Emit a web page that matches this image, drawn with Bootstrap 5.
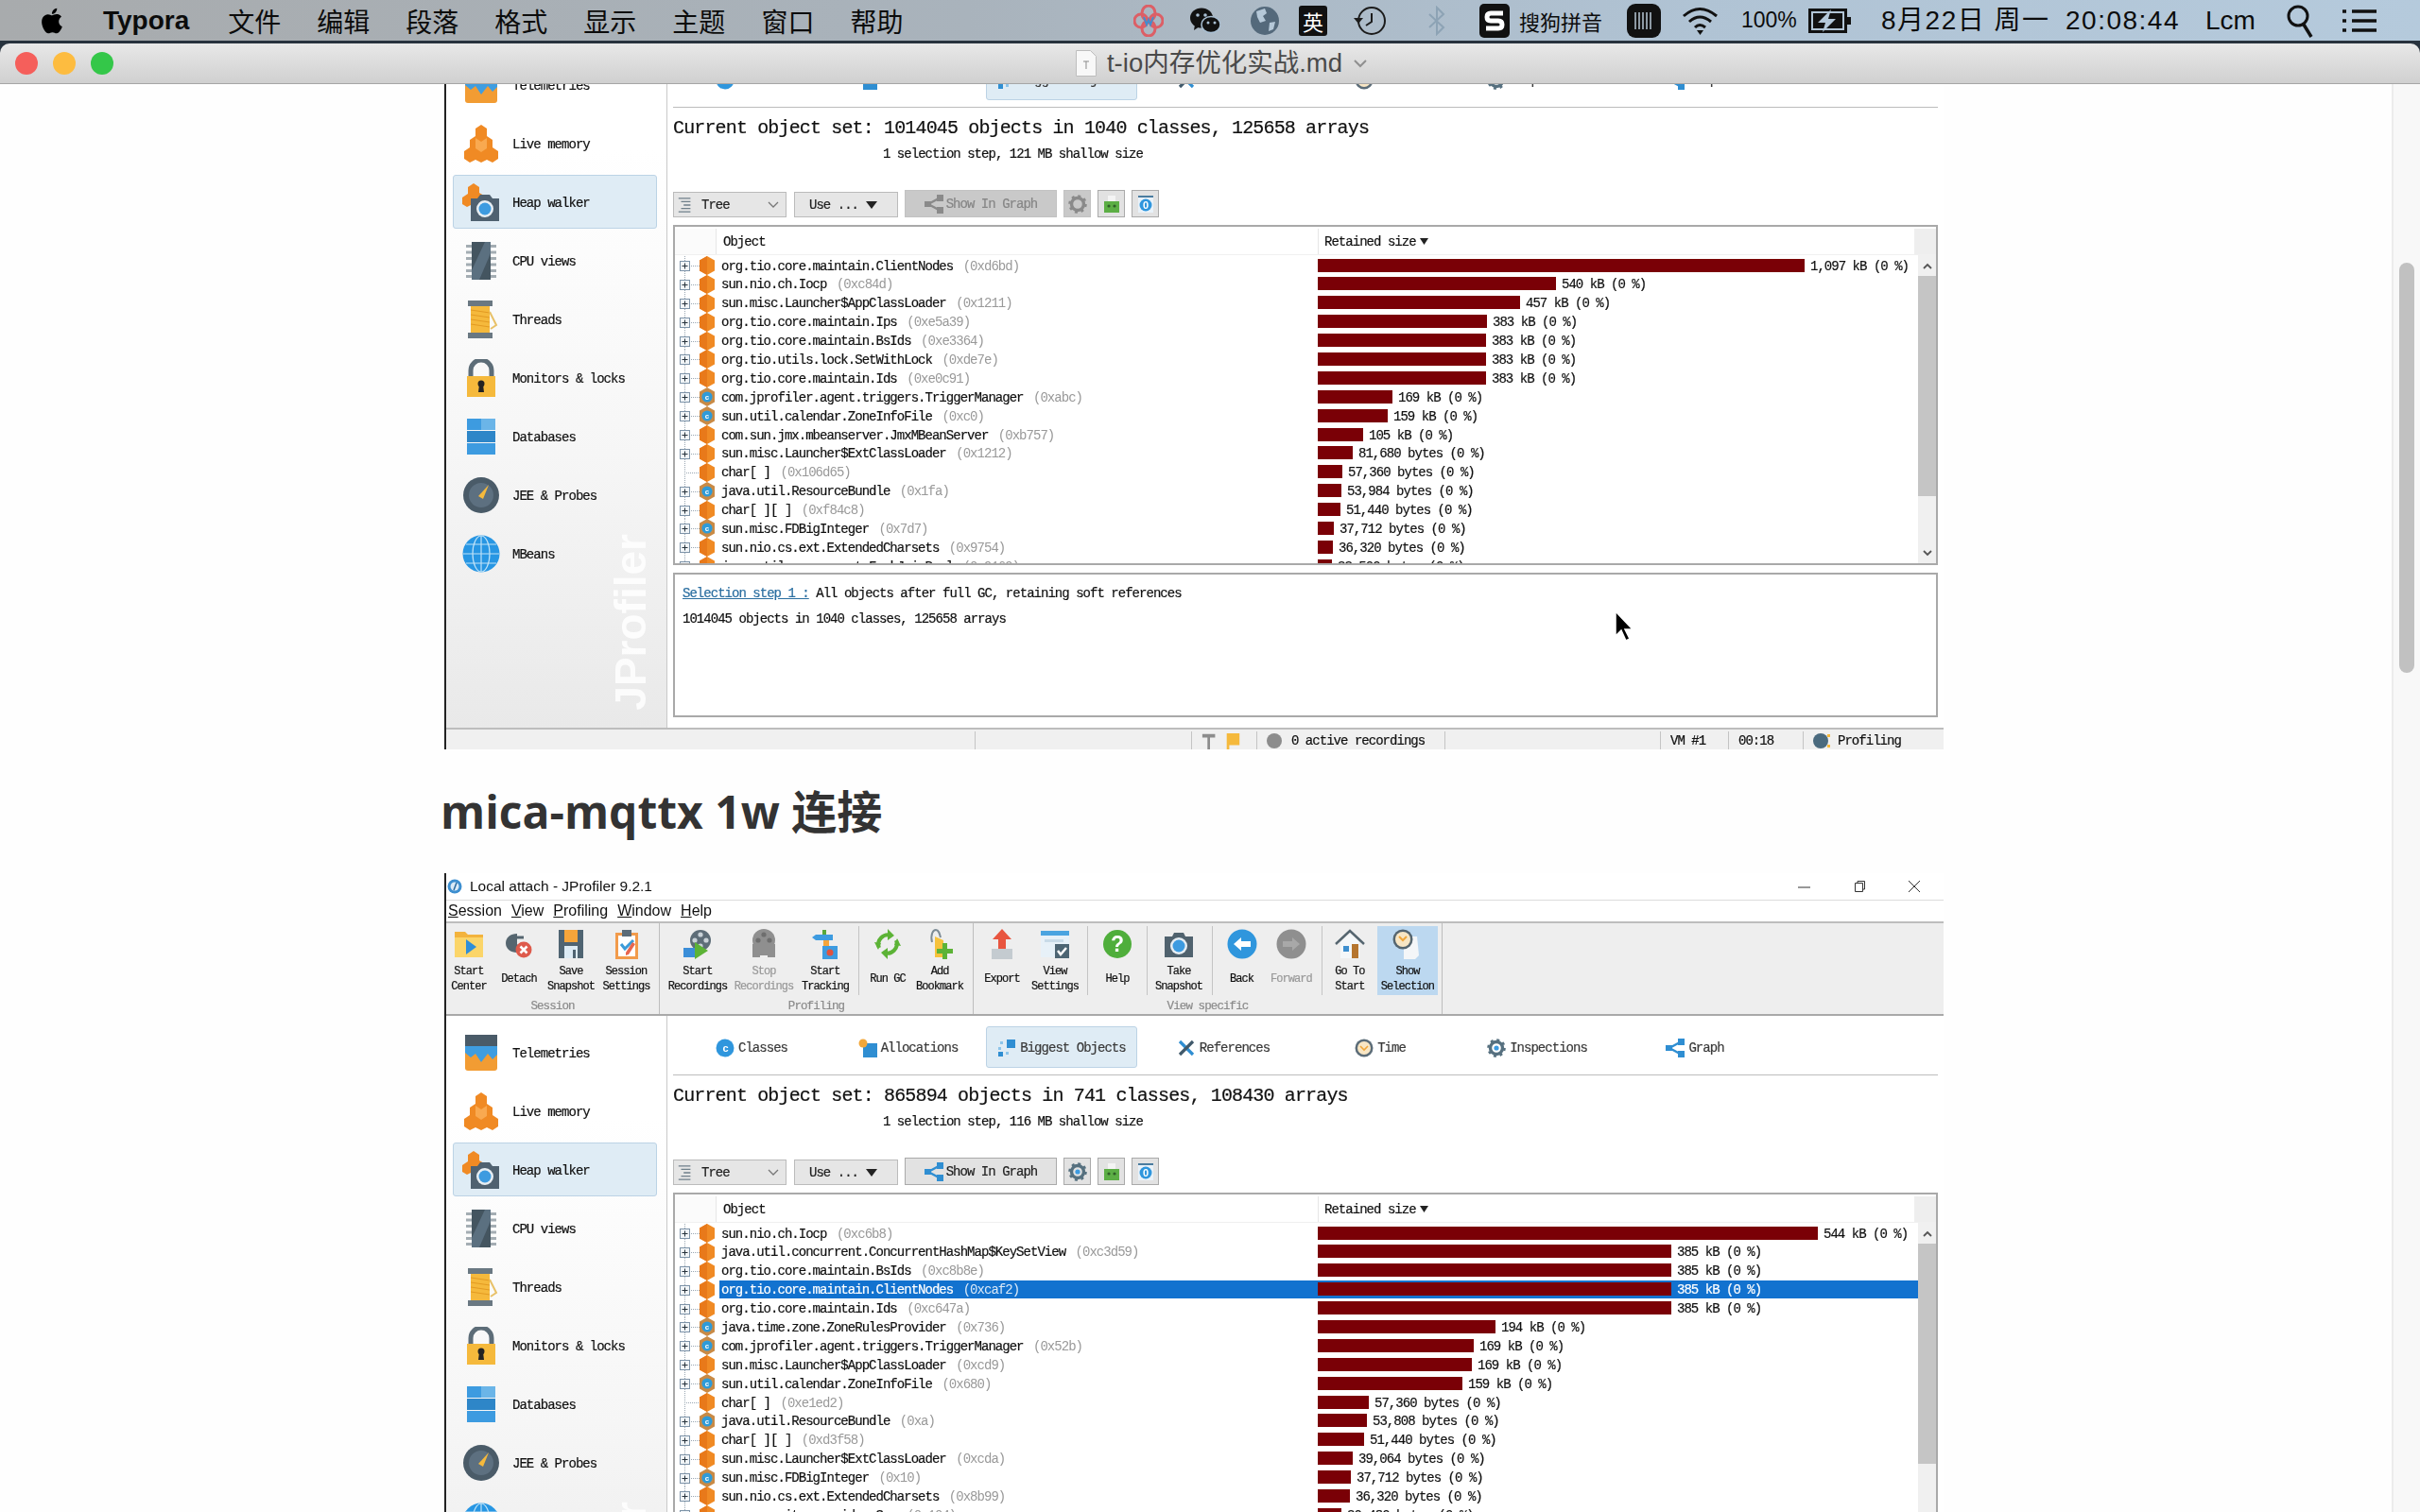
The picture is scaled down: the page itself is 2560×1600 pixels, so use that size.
<!DOCTYPE html>
<html lang="zh-CN">
<head>
  <meta charset="UTF-8" />
  <meta name="viewport" content="width=device-width, initial-scale=1.0"/>
  <title>t-io内存优化实战.md</title>
  <link href="https://cdn.jsdelivr.net/npm/bootstrap@5.3.2/dist/css/bootstrap.min.css" rel="stylesheet">
  <style>
    html, body { height: 100%; overflow: hidden; }
    body { background: #27323d; font-family: "Liberation Sans", "Noto Sans CJK SC", sans-serif; color: #111; }

    /* mac menu bar */
    .mac-bar { height: 43px; padding: 0 46px 0 39px; background: linear-gradient(90deg, #a8abad 0%, #a9b3bc 40%, #b0c3d4 70%, #b5cadc 100%); font-size: 28px; line-height: 1; color: #0c0c0c; }
    .mac-app { font-weight: 700; margin-left: 38px; margin-right: 41px; }
    .mac-item { margin-right: 38px; font-family: "Noto Sans CJK SC", sans-serif; }
    .t-flower { margin-left: 0; }
    .t-wechat { margin-left: 28px; }
    .t-globe { margin-left: 32px; }
    .t-ying { margin-left: 21px; width: 30px; height: 32px; background: #111; color: #fff; font-size: 22px; border-radius: 3px; font-family: "Noto Sans CJK SC", sans-serif; }
    .t-clock { margin-left: 28px; }
    .t-bt { margin-left: 42px; }
    .t-s { margin-left: 35px; }
    .t-sogou { margin-left: 10px; width: 88px; font-size: 22px; font-family: "Noto Sans CJK SC", sans-serif; white-space: nowrap; }
    .t-kbd { margin-left: 26px; }
    .t-wifi { margin-left: 22px; }
    .t-pct { margin-left: 24px; width: 60px; font-size: 23px; white-space: nowrap; }
    .t-batt { margin-left: 11px; }
    .t-date { margin-left: 31px; width: 177px; letter-spacing: 1.5px; white-space: nowrap; font-family: "Liberation Sans", "Noto Sans CJK SC", sans-serif; }
    .t-time { margin-left: 18px; width: 122px; letter-spacing: 1.5px; white-space: nowrap; }
    .t-user { margin-left: 26px; width: 53px; }
    .t-search { margin-left: 33px; }
    .t-list { margin-left: 31px; }

    /* typora window */
    .win-head { height: 43px; margin-top: 3px; border-radius: 10px 10px 0 0; background: linear-gradient(#e8e8e8, #d0d0d0); border-bottom: 1px solid #a6a6a6; }
    .light-dot { width: 24px; height: 24px; border-radius: 50%; margin-right: 16px; }
    .light-red { background: #f55f5b; }
    .light-amber { background: #fdbc40; }
    .light-green { background: #34c749; }
    .win-lights { margin-left: 16px; }
    .win-title { margin-left: 12px; font-size: 27.5px; line-height: 1; color: #4a4a4a; }
    .win-doc { margin-right: 3px; }
    .doc-area { height: 1511px; background: #fefefe; overflow: hidden; }
    .doc-body { width: 2530px; padding-left: 470px; }
    .doc-rail { width: 30px; background: #f8f8f8; border-left: 2px solid #ececec; padding-left: 6px; }
    .doc-thumb { width: 16px; height: 434px; margin-top: 189px; background: #c1c1c1; border-radius: 8px; }
    .doc-heading { height: 131px; margin: 0 0 0 -4px; font-family: "Open Sans", "Noto Sans CJK SC", sans-serif; font-weight: 700; font-size: 48px; color: #333; }
    .shot-first { margin-top: -38px; }
    .mac-cursor { position: absolute; left: 1706px; top: 645px; }

    /* jprofiler screenshot */
    .jp { width: 1586px; border-left: 2px solid #222; background: #fff; color: #111; filter: blur(.3px); }
    .sim { font-family: "Liberation Mono", monospace; font-size: 14px; letter-spacing: -.97px; line-height: 1; white-space: pre; padding-top: 2px; -webkit-text-stroke: .2px; }
    .jp-title { height: 29px; border-bottom: 1px solid #dcdcdc; font-size: 15.5px; padding-left: 1px; }
    .jp-menu { height: 24px; border-bottom: 2px solid #bdbdbd; font-size: 16px; padding-left: 2px; gap: 10px; }
    .jp-winbtn { margin-left: 44px; }
    .jp-tools { height: 98px; background: #eee; border-bottom: 2px solid #a9a9a9; }
    .jp-group { border-right: 1px solid #bdbdbd; }
    .jp-group-label { margin-top: 4px; font-size: 12.5px; letter-spacing: -.9px; color: #8b8b8b; }
    .jp-strip { height: 76px; }
    .jp-tool { padding-top: 3px; height: 73px; margin-top: 3px; }
    .jp-tool-off { color: #999; }
    .jp-tool-on { background: #bcd8f0; }
    .jp-tool-text { height: 32px; margin-top: 5px; padding-top: 0; font-size: 12px; letter-spacing: -.95px; line-height: 16px; }
    .jp-vline { width: 1px; height: 73px; margin-top: 3px; background: #c4c4c4; }
    .jp-main { height: 719px; }
    .jp-side { width: 234px; flex-shrink: 0; padding: 10px 0 0 7px; background: linear-gradient(#fff 15%, #f6f6f6 60%, #e9e9e9); border-right: 1px solid #c9c9c9; overflow: hidden; }
    .jp-side-item { width: 216px; height: 57px; margin-bottom: 5.1px; border: 1px solid transparent; border-radius: 3px; }
    .jp-side-on { background: #dfecf5; border-color: #bcd3e5; }
    .jp-side-icon { width: 58px; }
    .jp-mark { position: absolute; left: 172px; top: 514px; writing-mode: vertical-rl; transform: rotate(180deg); font-family: "Liberation Sans", sans-serif; font-weight: 700; font-size: 46px; line-height: 1; color: rgba(255,255,255,.85); }
    .jp-content { padding: 0 6px; min-width: 0; }
    .jp-tabs { height: 44px; margin-top: 11px; }
    .jp-tab { border: 1px solid transparent; border-radius: 3px; color: #3a3a3a; }
    .jp-tab-on { background: #dfecf5; border-color: #bcd3e5; }
    .jp-rule { height: 1px; margin-top: 7px; background: #bdbdbd; }
    .jp-set { height: 24px; margin-top: 9px; font-size: 20px; letter-spacing: -.85px; line-height: 24px; padding-top: 1px; }
    .jp-sub { height: 18px; margin: 6px 0 0 222px; line-height: 18px; padding-top: 1px; }
    .jp-ctrls { height: 29px; margin-top: 30px; gap: 7px; }
    .jp-ctl { height: 27px; padding: 0 7px; background: #e6e6e6; border: 1px solid #bbb; border-radius: 0; color: #222; }
    .jp-ctl:hover { background: #e6e6e6; border-color: #bbb; color: #222; }
    .jp-ctl-tree { width: 120px; padding-left: 3px; }
    .jp-ctl-use { width: 110px; margin-left: 1px; }
    .jp-ctl-graph { width: 161px; height: 29px; justify-content: center; gap: 3px; background: #e2e2e2; border-color: #aaa; }
    .jp-ctl-square { width: 29px; height: 29px; padding: 0; justify-content: center; background: #e2e2e2; border-color: #aaa; }
    .jp-ctl-dim.jp-ctl-graph, .jp-ctl-dim.jp-ctl-square { background: #c9c9c9; border-color: #c2c2c2; color: #868686; }
    .jp-tbl { height: 360px; margin-top: 8px; border: 2px solid #a9a9a9; overflow: hidden; }
    .jp-thead { height: 30px; border-bottom: 1px solid #f0f0f0; }
    .jp-th-gutter { width: 44px; background: #fbfbfb; border-right: 1px solid #e6e6e6; }
    .jp-th-obj { width: 636px; padding-left: 7px; }
    .jp-th-ret { width: 631px; padding-left: 6px; border-left: 1px solid #e6e6e6; }
    .jp-th-end { width: 23px; background: #eee; }
    .jp-rows { width: 1315px; padding-top: 1px; flex-shrink: 0; }
    .jp-line { height: 19.9px; }
    .jp-cell-obj { width: 633px; padding-left: 2px; height: 19px; }
    .jp-cell-ret { height: 19px; }
    .jp-bar { height: 14px; margin-top: -2px; background: #7a0006; margin-right: 6px; }
    .jp-addr { color: #999; margin-left: 3px; -webkit-text-stroke: 0; }
    .jp-pick .jp-cell-obj, .jp-pick .jp-cell-ret { background: #1272cf; color: #fff; }
    .jp-pick .jp-addr { color: #dbe9f7; }
    .jp-vbar { width: 19px; flex-shrink: 0; background: #f0f0f0; }
    .jp-vbtn { height: 22px; }
    .jp-vthumb { height: 233px; background: #c5c5c5; }
    .jp-detail { height: 153px; margin-top: 8px; border: 2px solid #a9a9a9; padding: 0 8px; }
    .jp-detail-a { height: 19px; margin-top: 10px; line-height: 17px; }
    .jp-detail-b { height: 19px; margin-top: 8px; line-height: 17px; }
    .jp-link { color: #2a6ea0; text-decoration: underline; }
    .jp-status { height: 23px; background: #f0f0f0; border-top: 2px solid #bdbdbd; }
    .jp-stat { border-right: 1px solid #c4c4c4; padding-left: 10px; gap: 6px; }
    .jp-stat:last-child { border-right: 0; }
  </style>
</head>
<body>

<svg class="d-none" xmlns="http://www.w3.org/2000/svg">
  <symbol id="i-apple" viewBox="0 0 24 24"><path fill="#000" d="M18.71 19.5c-.83 1.24-1.71 2.45-3.05 2.47-1.34.03-1.77-.79-3.29-.79-1.53 0-2 .77-3.27.82-1.31.05-2.3-1.32-3.14-2.53C4.25 17 2.94 12.45 4.7 9.39c.87-1.52 2.43-2.48 4.12-2.51 1.28-.02 2.5.87 3.29.87.78 0 2.26-1.07 3.81-.91.65.03 2.47.26 3.64 1.98-.09.06-2.17 1.28-2.15 3.81.03 3.02 2.65 4.03 2.68 4.04-.03.07-.42 1.44-1.38 2.83M13 3.5c.73-.83 1.94-1.46 2.94-1.5.13 1.17-.34 2.35-1.04 3.19-.69.85-1.83 1.51-2.95 1.42-.15-1.15.41-2.35 1.05-3.11z"/></symbol>

  <!-- toolbar -->
  <symbol id="t-start" viewBox="0 0 32 32"><path fill="#f3b33d" d="M1 3h11l3 3h16v24H1z"/><path fill="#fbd569" d="M1 9h30v21H1z"/><path fill="#2f8ed8" d="M13 11l11 8-11 8z"/></symbol>
  <symbol id="t-detach" viewBox="0 0 32 32"><path fill="#55656f" d="M2 15C2 9 7 5 14 5v20C7 25 2 21 2 15z"/><path stroke="#55656f" stroke-width="3" d="M14 9h7M14 18h4"/><circle cx="21" cy="22" r="8.5" fill="#de5a4b"/><path stroke="#fff" stroke-width="2.6" d="M17.5 18.5l7 7m0-7l-7 7"/></symbol>
  <symbol id="t-save" viewBox="0 0 32 32"><path fill="#4f6472" d="M3 1h26v30H3z"/><path fill="#f6a53a" d="M9 1h14v13H9z"/><path fill="#dcebf5" d="M9 18h14v13H9z"/><path fill="#4f6472" d="M18 22h3v9h-3z"/></symbol>
  <symbol id="t-session" viewBox="0 0 32 32"><path fill="#f29b4b" d="M4 4h24v28H4z"/><path fill="#fff" d="M7 7h18v22H7z"/><path fill="#5c6c78" d="M11 1h10v7H11z"/><path stroke="#3b9bd8" stroke-width="3" fill="none" d="M10 16l4 5 9-9"/><path fill="#e8664f" d="M22 14l3 2-7 11-3 1 0-3z"/></symbol>
  <symbol id="t-rec" viewBox="0 0 32 32"><circle cx="19" cy="12" r="11" fill="#5d6d78"/><circle cx="19" cy="6" r="2.6" fill="#c9d2d8"/><circle cx="13" cy="12" r="2.6" fill="#c9d2d8"/><circle cx="25" cy="12" r="2.6" fill="#c9d2d8"/><circle cx="19" cy="18" r="2.6" fill="#c9d2d8"/><path fill="#3b8ed8" d="M1 20h12v10H1z"/><path fill="#5cb336" d="M13 14l14 9-14 9z"/></symbol>
  <symbol id="t-stop" viewBox="0 0 32 32"><circle cx="16" cy="12" r="12" fill="#8f8f8f"/><circle cx="16" cy="6" r="2.6" fill="#6e6e6e"/><circle cx="10" cy="12" r="2.6" fill="#6e6e6e"/><circle cx="22" cy="12" r="2.6" fill="#6e6e6e"/><path fill="#8f8f8f" d="M4 16h8v14H4zM20 16h8v14h-8zM10 20h12v8H10z"/></symbol>
  <symbol id="t-track" viewBox="0 0 32 32"><path fill="#58a83a" d="M13 1h4v9h-4z"/><path fill="#3d9be0" d="M6 6h18v6H6l-4-3z"/><path fill="#f6a53a" d="M14 12h6v7h-6z"/><path fill="#3d9be0" d="M13 18h16v14H13z"/><circle cx="21" cy="25" r="3.5" fill="#e0533f"/></symbol>
  <symbol id="t-gc" viewBox="0 0 32 32"><path fill="none" stroke="#5cb336" stroke-width="4" d="M7 20A10 10 0 0 1 20 7"/><path fill="none" stroke="#5cb336" stroke-width="4" d="M25 12A10 10 0 0 1 12 25"/><path fill="#5cb336" d="M16 0l7 7-7 5zM16 32l-7-7 7-5zM2 14l7 1-3 7zM30 18l-7-1 3-7z"/></symbol>
  <symbol id="t-mark" viewBox="0 0 32 32"><path fill="none" stroke="#7d8c96" stroke-width="2" d="M8 14C6 6 9 1 12 1s4 4 5 8"/><path fill="#f6c23c" d="M11 8l9 4v18H11z"/><path fill="#5cb336" d="M19 15h5v6h6v5h-6v6h-5v-6h-6v-5h6z"/></symbol>
  <symbol id="t-export" viewBox="0 0 32 32"><path fill="#e8553f" d="M16 0l10 11h-6v10h-8V11H6z"/><path fill="#c4cbd0" d="M5 21h22v11H5z"/></symbol>
  <symbol id="t-view" viewBox="0 0 32 32"><path fill="#e7f1f8" d="M1 2h30v28H1z"/><path fill="#4aa4e0" d="M1 2h30v5H1z"/><path fill="#4d6573" d="M16 16h15v15H16z"/><path fill="none" stroke="#fff" stroke-width="2.5" d="M19 23l3 4 6-7"/><path fill="#c8dbe8" d="M5 11h20v3H5z"/></symbol>
  <symbol id="t-help" viewBox="0 0 32 32"><circle cx="16" cy="16" r="15" fill="#4fae3b"/><text x="16" y="24" text-anchor="middle" font-family="Liberation Sans" font-weight="700" font-size="23" fill="#fff">?</text></symbol>
  <symbol id="t-cam" viewBox="0 0 32 32"><path fill="#50626e" d="M1 8h8l2-4h10l2 4h8v22H1z"/><circle cx="16" cy="18" r="9" fill="#e7eef3"/><circle cx="16" cy="18" r="6.5" fill="#3d9be0"/></symbol>
  <symbol id="t-back" viewBox="0 0 32 32"><circle cx="16" cy="16" r="15.5" fill="#2f96dd"/><path fill="#fff" d="M7 16l8-7v4h10v6H15v4z"/></symbol>
  <symbol id="t-fwd" viewBox="0 0 32 32"><circle cx="16" cy="16" r="15.5" fill="#8f8f8f"/><path fill="#a8a8a8" d="M25 16l-8-7v4H7v6h10v4z"/></symbol>
  <symbol id="t-home" viewBox="0 0 32 32"><path fill="none" stroke="#55656f" stroke-width="2.4" d="M1 16L16 2l15 14"/><path fill="#f4f7f9" d="M6 14L16 5l10 9v17H6z"/><path fill="#3d8fcf" d="M9 18h6v6H9z"/><path fill="#b5752e" d="M18 16h7v15h-7z"/></symbol>
  <symbol id="t-clockdoc" viewBox="0 0 32 32"><path fill="#f4f6f8" d="M12 8h14l2 20-4 4H12z"/><circle cx="11" cy="11" r="10.5" fill="#55656f"/><circle cx="11" cy="11" r="8" fill="#f8e6c4"/><path fill="none" stroke="#f0a63a" stroke-width="2" d="M7 8l4 4 4-4"/></symbol>

  <!-- sidebar -->
  <symbol id="s-tele" viewBox="0 0 40 40"><path fill="#f29c33" d="M3 12h34v24a3 3 0 0 1-3 3H6a3 3 0 0 1-3-3z"/><path fill="#4a5b68" d="M3 1h34v12H3z"/><path fill="#3f9de0" d="M3 13h34v9l-5 5-5-6-7 9-6-9-5 4-6-5z"/></symbol>
  <symbol id="s-mem" viewBox="0 0 40 40"><path fill="#f08a24" d="M20 0l6 4v8l6 4v8l6 4v8l-6 4-6-3-6 3-6-3-6 3-6-4v-8l6-4v-8l6-4V4z"/><path fill="#f9a950" d="M14 14l6 4 6-4v11l-6 4-6-4z"/></symbol>
  <symbol id="s-heap" viewBox="0 0 40 40"><path fill="#f08a24" d="M12 0l6 4v6l5 3v8l-6 4-6-3-6 3-5-3v-7l6-4V4z"/><path fill="#4f6170" d="M9 16h7l3-4h10l3 4h7v24H9z"/><circle cx="24" cy="27" r="9" fill="#e7eef3"/><circle cx="24" cy="27" r="6.5" fill="#3d9be0"/></symbol>
  <symbol id="s-cpu" viewBox="0 0 40 40"><path fill="#a4adb3" d="M4 3h32v3H4zM4 9.500h32v3H4zM4 16h32v3H4zM4 22.500h32v3H4zM4 29h32v3H4zM4 35h32v3H4z"/><path fill="#445560" d="M10 0h20v40H10z"/><path fill="#5b7080" d="M10 30L24 0h6v12L18 40h-8z"/></symbol>
  <symbol id="s-thread" viewBox="0 0 40 40"><path fill="#f5b93c" d="M9 6h20v28H9z"/><path stroke="#e39a22" fill="none" d="M9 10l20 3M9 15l20 3M9 20l20 3M9 25l20 3"/><path fill="#6a7882" d="M6 0h26v6H6zM6 34h26v6H6z"/><path fill="none" stroke="#e8c168" stroke-width="2" d="M29 12l7 14-6 4"/></symbol>
  <symbol id="s-lock" viewBox="0 0 40 40"><path fill="none" stroke="#5d6d78" stroke-width="5" d="M9 20V12a11 11 0 0 1 22 0v8"/><path fill="#f5b93c" d="M5 18h30v22H5z"/><circle cx="20" cy="26" r="3.5" fill="#222"/><path fill="#222" d="M18 27h4l1 8h-6z"/></symbol>
  <symbol id="s-db" viewBox="0 0 40 40"><path fill="#3d9be0" d="M5 1h30v12H5z"/><path fill="#2e86c8" d="M5 14h30v12H5z"/><path fill="#3d9be0" d="M5 27h30v12H5z"/><path fill="#6bb5e8" d="M20 1h15v12H20z"/></symbol>
  <symbol id="s-gauge" viewBox="0 0 40 40"><circle cx="20" cy="20" r="19" fill="#4a5b68"/><circle cx="20" cy="20" r="13" fill="#5d7080"/><path fill="#f5b93c" d="M28 9l-6 15-5-3z"/></symbol>
  <symbol id="s-globe" viewBox="0 0 40 40"><circle cx="20" cy="20" r="19.5" fill="#2796e3"/><path fill="none" stroke="#bfe2f7" stroke-width="1.2" d="M20 1v38M1 20h38M4 10h32M4 30h32"/><ellipse cx="20" cy="20" rx="9" ry="19" fill="none" stroke="#bfe2f7" stroke-width="1.2"/></symbol>

  <!-- tabs -->
  <symbol id="b-class" viewBox="0 0 20 20"><circle cx="10" cy="10" r="9.5" fill="#2f96dd"/><text x="10" y="14" text-anchor="middle" font-family="Liberation Sans" font-weight="700" font-size="11" fill="#fff">c</text></symbol>
  <symbol id="b-alloc" viewBox="0 0 20 20"><path fill="#2f8ed2" d="M5 5h15v15H5z"/><circle cx="5" cy="5" r="4.5" fill="#f2a73a"/></symbol>
  <symbol id="b-big" viewBox="0 0 20 20"><path fill="#2f8ed2" d="M10 1h9v9h-9zM1 14h5v5H1z"/><path fill="#8cc4ea" d="M3 3h3v3H3zM1 9h3v3H1zM9 14h3v3H9z"/></symbol>
  <symbol id="b-ref" viewBox="0 0 20 20"><path stroke="#2f8ed2" stroke-width="3.2" d="M3 3l14 14"/><path stroke="#40596b" stroke-width="3.2" d="M17 3L3 17"/></symbol>
  <symbol id="b-time" viewBox="0 0 20 20"><circle cx="10" cy="10" r="9.5" fill="#5b6c78"/><circle cx="10" cy="10" r="7" fill="#f8e6c4"/><path fill="none" stroke="#f0a63a" stroke-width="1.6" d="M6 8l4 4 4-4"/></symbol>
  <symbol id="b-gear" viewBox="0 0 20 20"><circle cx="10" cy="10" r="6.5" fill="none" stroke="#56707f" stroke-width="3.4"/><circle cx="10" cy="10" r="8.6" fill="none" stroke="#56707f" stroke-width="2.4" stroke-dasharray="3 3.75"/><circle cx="10" cy="10" r="2.6" fill="#3d9be0"/></symbol>
  <symbol id="b-gearoff" viewBox="0 0 20 20"><circle cx="10" cy="10" r="6.5" fill="none" stroke="#8a8a8a" stroke-width="3.4"/><circle cx="10" cy="10" r="8.6" fill="none" stroke="#8a8a8a" stroke-width="2.4" stroke-dasharray="3 3.75"/></symbol>
  <symbol id="b-graph" viewBox="0 0 20 20"><path stroke="#2f8ed2" stroke-width="2.4" d="M4 10l11-6M4 10l11 6"/><path fill="#2f8ed2" d="M0 7h7v6H0zM13 0h7v7h-7zM13 13h7v7h-7z"/></symbol>
  <symbol id="b-graphoff" viewBox="0 0 20 20"><path stroke="#8a8a8a" stroke-width="2.4" d="M4 10l11-6M4 10l11 6"/><path fill="#8a8a8a" d="M0 7h7v6H0zM13 0h7v7h-7zM13 13h7v7h-7z"/></symbol>
  <symbol id="b-tree" viewBox="0 0 20 20"><path stroke="#6f7f8a" stroke-width="1.4" d="M2 2h14M5 6h11M8 10h8M5 14h11M2 18h14"/></symbol>
  <symbol id="b-print" viewBox="0 0 20 20"><path fill="#f4f4f4" d="M6 1h8v6H6z"/><path fill="#5cae45" d="M2 7h16v12H2z"/><circle cx="7" cy="12" r="1.6" fill="#2f5e28"/><circle cx="13" cy="12" r="1.6" fill="#2f5e28"/></symbol>
  <symbol id="b-info" viewBox="0 0 20 20"><path fill="#e9f2f9" d="M2 1h16v18H2z"/><path fill="#4a7c9f" d="M2 1h16v2H2z"/><circle cx="10" cy="11" r="6.5" fill="#2f96dd"/><text x="10" y="15" text-anchor="middle" font-family="Liberation Sans" font-weight="700" font-size="11" fill="#fff">0</text></symbol>

  <!-- tree rows, drawn in a 47x20 gutter -->
  <symbol id="r-exp"><path stroke="#9aa7b2" stroke-dasharray="1 1" fill="none" d="M10.5 0v20M15 10.5h11"/><rect x="5.5" y="5.5" width="10" height="10" fill="#f1f5f8" stroke="#7d93a8"/><path stroke="#26323c" d="M7.5 10.5h6M10.5 7.5v6"/></symbol>
  <symbol id="r-leaf"><path stroke="#9aa7b2" stroke-dasharray="1 1" fill="none" d="M10.5 0v20M10 10.5h16"/></symbol>
  <symbol id="r-hex"><path fill="#f08a24" d="M34 0l8 4.5v11L34 20l-8-4.5v-11z"/><path fill="#e8791a" d="M34 0l-8 4.5v11L34 20z"/></symbol>
  <symbol id="r-cls"><path fill="#c98a45" d="M34 0l8 4.5v11L34 20l-8-4.5v-11z"/><circle cx="34" cy="10" r="5.6" fill="#2f9bd8"/><text x="34" y="13" text-anchor="middle" font-family="Liberation Sans" font-weight="700" font-size="8" fill="#fff">c</text></symbol>

  <!-- status bar -->
  <symbol id="x-hammer" viewBox="0 0 20 20"><path fill="#8c8c8c" d="M1 2h15v4H10v14H7V6H1z"/></symbol>
  <symbol id="x-flag" viewBox="0 0 20 20"><path fill="#f5b93c" d="M3 1h15v14H6v5H3z"/></symbol>
  <symbol id="x-prof" viewBox="0 0 20 20"><circle cx="8" cy="10" r="8" fill="#4a6a7e"/><path fill="#f5b93c" d="M15 3h3v3h-3zM15 14h3v3h-3z"/></symbol>
</svg>

<!-- mac menu bar -->
<nav class="navbar flex-nowrap justify-content-start mac-bar">
  <svg width="32" height="36"><use href="#i-apple"/></svg>
  <span class="mac-app">Typora</span>
  <span class="mac-item">文件</span>
  <span class="mac-item">编辑</span>
  <span class="mac-item">段落</span>
  <span class="mac-item">格式</span>
  <span class="mac-item">显示</span>
  <span class="mac-item">主题</span>
  <span class="mac-item">窗口</span>
  <span class="mac-item me-0">帮助</span>
  <div class="d-flex align-items-center ms-auto">
    <svg class="t-flower" width="32" height="34" viewBox="0 0 32 34"><g fill="none" stroke="#dc5f66" stroke-width="3"><ellipse cx="16" cy="9" rx="7" ry="8"/><ellipse cx="16" cy="25" rx="7" ry="8"/><ellipse cx="8" cy="17" rx="7" ry="7"/><ellipse cx="24" cy="17" rx="7" ry="7"/></g><path fill="none" stroke="#3f8ed0" stroke-width="2" d="M11 13l3 8 2-5 2 5 3-8"/></svg>
    <svg class="t-wechat" width="32" height="28" viewBox="0 0 32 28"><ellipse cx="12" cy="11" rx="12" ry="10.5" fill="#111"/><path fill="#111" d="M5 18l-1 6 6-4z"/><ellipse cx="22" cy="18" rx="10" ry="8.5" fill="#111" stroke="#a9c0d4" stroke-width="1.5"/><circle cx="8" cy="8" r="1.8" fill="#a9c0d4"/><circle cx="16" cy="8" r="1.8" fill="#a9c0d4"/><circle cx="19" cy="16" r="1.5" fill="#a9c0d4"/><circle cx="26" cy="16" r="1.5" fill="#a9c0d4"/></svg>
    <svg class="t-globe" width="30" height="30" viewBox="0 0 30 30"><circle cx="15" cy="15" r="15" fill="#54697b"/><path fill="#b5c8d8" d="M6 5l9-3 2 5-4 3 3 5-6 2-3-6zM20 17l6-1-2 8-5 2z"/></svg>
    <span class="t-ying d-flex align-items-center justify-content-center">英</span>
    <svg class="t-clock" width="36" height="32" viewBox="0 0 36 32"><circle cx="19" cy="16" r="14" fill="none" stroke="#1c1c1c" stroke-width="2"/><path fill="none" stroke="#1c1c1c" stroke-width="2" d="M19 8v9l-6 4"/><path fill="#1c1c1c" d="M0 13h10l-5 6z"/></svg>
    <svg class="t-bt" width="20" height="32" viewBox="0 0 20 32"><path fill="none" stroke="#8da3b5" stroke-width="2" d="M2 9l15 14-7 7V2l7 7L2 23"/></svg>
    <svg class="t-s" width="32" height="36" viewBox="0 0 32 36"><rect width="32" height="36" rx="5" fill="#111"/><path fill="none" stroke="#fff" stroke-width="5" d="M25 10H12q-4 0-4 4t4 4h8q4 0 4 4t-4 4H7"/></svg>
    <span class="t-sogou">搜狗拼音</span>
    <svg class="t-kbd" width="36" height="36" viewBox="0 0 36 36"><rect width="36" height="36" rx="9" fill="#111"/><path stroke="#b6c6d4" stroke-width="1.5" d="M9 9v18M13 9v18M17 9v18M21 9v18M25 9v18"/></svg>
    <svg class="t-wifi" width="39" height="30" viewBox="0 0 39 30"><g fill="none" stroke="#111" stroke-width="3"><path d="M2 10q17-15 35 0"/><path d="M8 16q11-10 23 0"/><path d="M14 22q5-5 11 0"/></g><path fill="#111" d="M16 25h7l-3.500 5z"/></svg>
    <span class="t-pct">100%</span>
    <svg class="t-batt" width="46" height="30" viewBox="0 0 46 30"><rect x="1.500" y="3.500" width="38" height="23" fill="none" stroke="#111" stroke-width="3"/><rect x="5" y="7" width="31" height="16" fill="#111"/><path fill="#b4c8da" d="M24 3L10 17h8l-3 10 14-14h-8z"/><rect x="41" y="11" width="4" height="8" fill="#111"/></svg>
    <span class="t-date">8月22日 周一</span>
    <span class="t-time">20:08:44</span>
    <span class="t-user">Lcm</span>
    <svg class="t-search" width="28" height="36" viewBox="0 0 28 36"><circle cx="12" cy="13" r="10" fill="none" stroke="#111" stroke-width="3"/><path stroke="#111" stroke-width="3.500" d="M18 22l8 13"/></svg>
    <svg class="t-list" width="36" height="26" viewBox="0 0 36 26"><path stroke="#111" stroke-width="3.500" d="M0 3h4M10 3h26M0 13h4M10 13h26M0 23h4M10 23h26"/></svg>
  </div>
</nav>

<!-- typora window -->
<header class="win-head d-flex align-items-center position-relative">
  <div class="d-flex win-lights">
    <span class="light-dot light-red"></span>
    <span class="light-dot light-amber"></span>
    <span class="light-dot light-green"></span>
  </div>
  <div class="position-absolute start-50 translate-middle-x d-flex align-items-center gap-2 win-title">
    <svg class="win-doc" width="22" height="28" viewBox="0 0 22 28"><path fill="#f8f8f8" stroke="#bdbdbd" d="M.5.5h15l6 6v21H.5z"/><path fill="none" stroke="#8a8a8a" d="M8 12h6M11 12v8"/></svg>
    <span>t-io内存优化实战.md</span>
    <svg class="ms-1" width="14" height="9" viewBox="0 0 14 9"><path fill="none" stroke="#8f8f8f" stroke-width="2" d="M1 1l6 6 6-6"/></svg>
  </div>
</header>

<main class="doc-area d-flex position-relative">
  <div class="doc-body">
    <div class="jp shot-first" id="shotA"></div>
    <h2 class="doc-heading d-flex align-items-center">mica-mqttx 1w 连接</h2>
    <div class="jp" id="shotB"></div>
  </div>
  <div class="doc-rail"><div class="doc-thumb"></div></div>
</main>

<svg class="mac-cursor" width="24" height="36" viewBox="0 0 24 36"><path fill="#000" stroke="#fff" stroke-width="1.500" d="M3 2v26l6-6 5 11 4-2-5-10h8z"/></svg>

<script src="https://cdn.jsdelivr.net/npm/bootstrap@5.3.2/dist/js/bootstrap.bundle.min.js"></script>
<script>
const use = (id, w, h) => `<svg class="flex-shrink-0" width="${w}" height="${h || w}"><use href="#${id}"/></svg>`;

const toolGroups = [
  { label: "Session", width: 226, items: [
    ["t-start", "Start\nCenter", 48], ["t-detach", "Detach", 58], ["t-save", "Save\nSnapshot", 52], ["t-session", "Session\nSettings", 65]
  ]},
  { label: "Profiling", width: 332, items: [
    ["t-rec", "Start\nRecordings", 80], ["t-stop", "Stop\nRecordings", 60, "off"], ["t-track", "Start\nTracking", 70], "sep",
    ["t-gc", "Run GC", 60], ["t-mark", "Add\nBookmark", 50]
  ]},
  { label: "View specific", width: 496, items: [
    ["t-export", "Export", 60], ["t-view", "View\nSettings", 52], 8, "sep", ["t-help", "Help", 62], "sep",
    ["t-cam", "Take\nSnapshot", 66], 2, "sep", ["t-back", "Back", 61], ["t-fwd", "Forward", 44, "off"], 10, "sep",
    ["t-home", "Go To\nStart", 58], ["t-clockdoc", "Show\nSelection", 64, "on"]
  ]}
];

const sideItems = [
  ["s-tele", "Telemetries"], ["s-mem", "Live memory"], ["s-heap", "Heap walker"], ["s-cpu", "CPU views"], ["s-thread", "Threads"],
  ["s-lock", "Monitors & locks"], ["s-db", "Databases"], ["s-gauge", "JEE & Probes"], ["s-globe", "MBeans"]
];

const tabItems = [
  ["b-class", "Classes", 166], ["b-alloc", "Allocations", 165], ["b-big", "Biggest Objects", 160], ["b-ref", "References", 182],
  ["b-time", "Time", 150], ["b-gear", "Inspections", 182], ["b-graph", "Graph", 152]
];

function toolsHtml() {
  return toolGroups.map(g => {
    const items = g.items.map(it => {
      if (it === "sep") return `<div class="jp-vline flex-shrink-0"></div>`;
      if (typeof it === "number") return `<div class="flex-shrink-0" style="width:${it}px"></div>`;
      const [icon, text, w, state] = it;
      const cls = state === "off" ? "jp-tool-off" : state === "on" ? "jp-tool-on" : "";
      return `<div class="jp-tool d-flex flex-column align-items-center flex-shrink-0 ${cls}" style="width:${w}px">
        ${use(icon, 32)}
        <div class="jp-tool-text sim text-center d-flex align-items-center">${text.replace("\n", "<br>")}</div>
      </div>`;
    }).join("");
    return `<div class="jp-group" style="width:${g.width}px">
      <div class="jp-strip d-flex">${items}</div>
      <div class="jp-group-label sim text-center">${g.label}</div>
    </div>`;
  }).join("");
}

function rowHtml(r) {
  const [name, addr, size, width, kind, pick] = r;
  const gutter = (kind === "leaf" ? "#r-leaf" : "#r-exp");
  const body = kind === "cls" ? "#r-cls" : "#r-hex";
  return `<div class="jp-line d-flex ${pick ? "jp-pick" : ""}">
    <svg class="flex-shrink-0" width="47" height="20"><use href="${gutter}"/><use href="${body}"/></svg>
    <div class="jp-cell-obj sim d-flex align-items-center flex-shrink-0">${name} <span class="jp-addr">(${addr})</span></div>
    <div class="jp-cell-ret sim d-flex align-items-center flex-grow-1"><span class="jp-bar" style="width:${width}px"></span>${size} (0 %)</div>
  </div>`;
}

function chromeHtml() {
  return `
  <div class="jp-title d-flex align-items-center">
    <svg class="me-1" width="16" height="18" viewBox="0 0 16 18"><circle cx="8" cy="9" r="7.5" fill="#3d8fd0"/><circle cx="8" cy="9" r="4.5" fill="#dbeaf6"/><path stroke="#2b6aa0" stroke-width="1.500" d="M10 5L7 13"/></svg>
    <span class="ms-1">Local attach - JProfiler 9.2.1</span>
    <div class="ms-auto d-flex align-items-center">
      <svg width="14" height="14"><path stroke="#333" d="M0 8h13"/></svg>
      <svg class="jp-winbtn" width="14" height="14" viewBox="0 0 14 14"><path fill="none" stroke="#333" d="M2.500 3.500h8v9h-8zM5 3V1.500h7.500V10H11"/></svg>
      <svg class="jp-winbtn me-4" width="14" height="14" viewBox="0 0 14 14"><path stroke="#333" d="M1 1l12 12M13 1L1 13"/></svg>
    </div>
  </div>
  <div class="jp-menu d-flex align-items-center">
    <span><u>S</u>ession</span><span><u>V</u>iew</span><span><u>P</u>rofiling</span><span><u>W</u>indow</span><span><u>H</u>elp</span>
  </div>
  <div class="jp-tools d-flex">${toolsHtml()}</div>`;
}

function footHtml(d) {
  return `
      <div class="jp-detail">
        <div class="jp-detail-a sim"><span class="jp-link">Selection step 1 :</span> All objects after full GC, retaining soft references</div>
        <div class="jp-detail-b sim">${d.summary}</div>
      </div>`;
}

function statusHtml() {
  return `
  <div class="jp-status d-flex sim">
    <div class="jp-stat d-flex align-items-center" style="width:560px"></div>
    <div class="jp-stat d-flex align-items-center" style="width:229px"></div>
    <div class="jp-stat d-flex align-items-center" style="width:69px">${use("x-hammer", 18)}${use("x-flag", 18)}</div>
    <div class="jp-stat d-flex align-items-center" style="width:199px"><svg class="flex-shrink-0" width="16" height="18"><circle cx="8" cy="9" r="8" fill="#8c8c8c"/></svg><span class="ms-1">0 active recordings</span></div>
    <div class="jp-stat d-flex align-items-center" style="width:228px"></div>
    <div class="jp-stat d-flex align-items-center" style="width:72px">VM #1</div>
    <div class="jp-stat d-flex align-items-center" style="width:79px">00:18</div>
    <div class="jp-stat d-flex align-items-center" style="width:148px">${use("x-prof", 20)}Profiling</div>
  </div>`;
}

function shotHtml(d) {
  const off = d.dim ? "jp-ctl-dim" : "";
  return `
  ${d.chrome ? chromeHtml() : ""}
  <div class="jp-main d-flex">
    <div class="jp-side position-relative">
      ${sideItems.map(s => `<div class="jp-side-item d-flex align-items-center ${s[1] === "Heap walker" ? "jp-side-on" : ""}">
        <div class="jp-side-icon d-flex justify-content-center">${use(s[0], 40)}</div><span class="sim ms-1">${s[1].replace("&", "&amp;")}</span>
      </div>`).join("")}
      <div class="jp-mark">JProfiler</div>
    </div>
    <div class="jp-content flex-grow-1">
      <div class="jp-tabs d-flex">
        ${tabItems.map(t => `<div class="jp-tab sim d-flex align-items-center justify-content-center gap-1 flex-shrink-0 ${t[1] === "Biggest Objects" ? "jp-tab-on" : ""}" style="width:${t[2]}px">${use(t[0], 20)}${t[1]}</div>`).join("")}
      </div>
      <div class="jp-rule"></div>
      <div class="jp-set sim">Current object set: ${d.summary}</div>
      <div class="jp-sub sim">1 selection step, ${d.shallow} shallow size</div>
      <div class="jp-ctrls d-flex align-items-end">
        <button class="btn jp-ctl jp-ctl-tree sim d-flex align-items-center">${use("b-tree", 18)}<span class="ms-2">Tree</span><svg class="ms-auto" width="12" height="8" viewBox="0 0 12 8"><path fill="none" stroke="#777" stroke-width="1.300" d="M1 1l5 5 5-5"/></svg></button>
        <button class="btn jp-ctl jp-ctl-use sim d-flex align-items-center"><span class="ms-2">Use ...</span><svg class="ms-2" width="12" height="8" viewBox="0 0 12 8"><path fill="#222" d="M0 0h12L6 8z"/></svg></button>
        <button class="btn jp-ctl jp-ctl-graph sim d-flex align-items-center ${off}">${use(d.dim ? "b-graphoff" : "b-graph", 20)}Show In Graph</button>
        <button class="btn jp-ctl jp-ctl-square d-flex align-items-center ${off}">${use(d.dim ? "b-gearoff" : "b-gear", 20)}</button>
        <button class="btn jp-ctl jp-ctl-square d-flex align-items-center">${use("b-print", 20)}</button>
        <button class="btn jp-ctl jp-ctl-square d-flex align-items-center">${use("b-info", 20)}</button>
      </div>
      <div class="jp-tbl d-flex flex-column">
        <div class="jp-thead d-flex flex-shrink-0 sim">
          <div class="jp-th-gutter"></div>
          <div class="jp-th-obj d-flex align-items-center">Object</div>
          <div class="jp-th-ret d-flex align-items-center">Retained size<svg class="ms-1" width="9" height="7" viewBox="0 0 9 7"><path fill="#222" d="M0 0h9L4.500 7z"/></svg></div>
          <div class="jp-th-end flex-grow-1"></div>
        </div>
        <div class="d-flex flex-grow-1 overflow-hidden">
          <div class="jp-rows">${d.rows.map(rowHtml).join("")}</div>
          <div class="jp-vbar d-flex flex-column flex-grow-1">
            <div class="jp-vbtn d-flex align-items-center justify-content-center"><svg width="10" height="7" viewBox="0 0 10 7"><path fill="none" stroke="#555" stroke-width="1.800" d="M1 6l4-4 4 4"/></svg></div>
            <div class="jp-vthumb"></div>
            <div class="flex-grow-1"></div>
            <div class="jp-vbtn d-flex align-items-center justify-content-center"><svg width="10" height="7" viewBox="0 0 10 7"><path fill="none" stroke="#555" stroke-width="1.800" d="M1 1l4 4 4-4"/></svg></div>
          </div>
        </div>
      </div>
      ${d.foot ? footHtml(d) : ""}
    </div>
  </div>
  ${d.foot ? statusHtml() : ""}`;
}

const rowsA = [
  ["org.tio.core.maintain.ClientNodes", "0xd6bd", "1,097 kB", 515],
  ["sun.nio.ch.Iocp", "0xc84d", "540 kB", 252],
  ["sun.misc.Launcher$AppClassLoader", "0x1211", "457 kB", 214],
  ["org.tio.core.maintain.Ips", "0xe5a39", "383 kB", 179],
  ["org.tio.core.maintain.BsIds", "0xe3364", "383 kB", 178],
  ["org.tio.utils.lock.SetWithLock", "0xde7e", "383 kB", 178],
  ["org.tio.core.maintain.Ids", "0xe0c91", "383 kB", 178],
  ["com.jprofiler.agent.triggers.TriggerManager", "0xabc", "169 kB", 79, "cls"],
  ["sun.util.calendar.ZoneInfoFile", "0xc0", "159 kB", 74, "cls"],
  ["com.sun.jmx.mbeanserver.JmxMBeanServer", "0xb757", "105 kB", 48],
  ["sun.misc.Launcher$ExtClassLoader", "0x1212", "81,680 bytes", 37],
  ["char[ ]", "0x106d65", "57,360 bytes", 26, "leaf"],
  ["java.util.ResourceBundle", "0x1fa", "53,984 bytes", 25, "cls"],
  ["char[ ][ ]", "0xf84c8", "51,440 bytes", 24],
  ["sun.misc.FDBigInteger", "0x7d7", "37,712 bytes", 17, "cls"],
  ["sun.nio.cs.ext.ExtendedCharsets", "0x9754", "36,320 bytes", 16],
  ["java.util.concurrent.ForkJoinPool", "0x9169", "33,500 bytes", 15]
];

const rowsB = [
  ["sun.nio.ch.Iocp", "0xc6b8", "544 kB", 529],
  ["java.util.concurrent.ConcurrentHashMap$KeySetView", "0xc3d59", "385 kB", 374],
  ["org.tio.core.maintain.BsIds", "0xc8b8e", "385 kB", 374],
  ["org.tio.core.maintain.ClientNodes", "0xcaf2", "385 kB", 374, "", true],
  ["org.tio.core.maintain.Ids", "0xc647a", "385 kB", 374],
  ["java.time.zone.ZoneRulesProvider", "0x736", "194 kB", 188, "cls"],
  ["com.jprofiler.agent.triggers.TriggerManager", "0x52b", "169 kB", 165, "cls"],
  ["sun.misc.Launcher$AppClassLoader", "0xcd9", "169 kB", 163],
  ["sun.util.calendar.ZoneInfoFile", "0x680", "159 kB", 153, "cls"],
  ["char[ ]", "0xe1ed2", "57,360 bytes", 54, "leaf"],
  ["java.util.ResourceBundle", "0xa", "53,808 bytes", 52, "cls"],
  ["char[ ][ ]", "0xd3f58", "51,440 bytes", 49],
  ["sun.misc.Launcher$ExtClassLoader", "0xcda", "39,064 bytes", 37],
  ["sun.misc.FDBigInteger", "0x10", "37,712 bytes", 35, "cls"],
  ["sun.nio.cs.ext.ExtendedCharsets", "0x8b99", "36,320 bytes", 34],
  ["sun.security.provider.Sun", "0x104", "30,480 bytes", 25]
];

document.getElementById("shotA").innerHTML = shotHtml({
  summary: "1014045 objects in 1040 classes, 125658 arrays", shallow: "121 MB", rows: rowsA, dim: true, chrome: false, foot: true
});
document.getElementById("shotB").innerHTML = shotHtml({
  summary: "865894 objects in 741 classes, 108430 arrays", shallow: "116 MB", rows: rowsB, dim: false, chrome: true, foot: false
});
</script>
</body>
</html>
